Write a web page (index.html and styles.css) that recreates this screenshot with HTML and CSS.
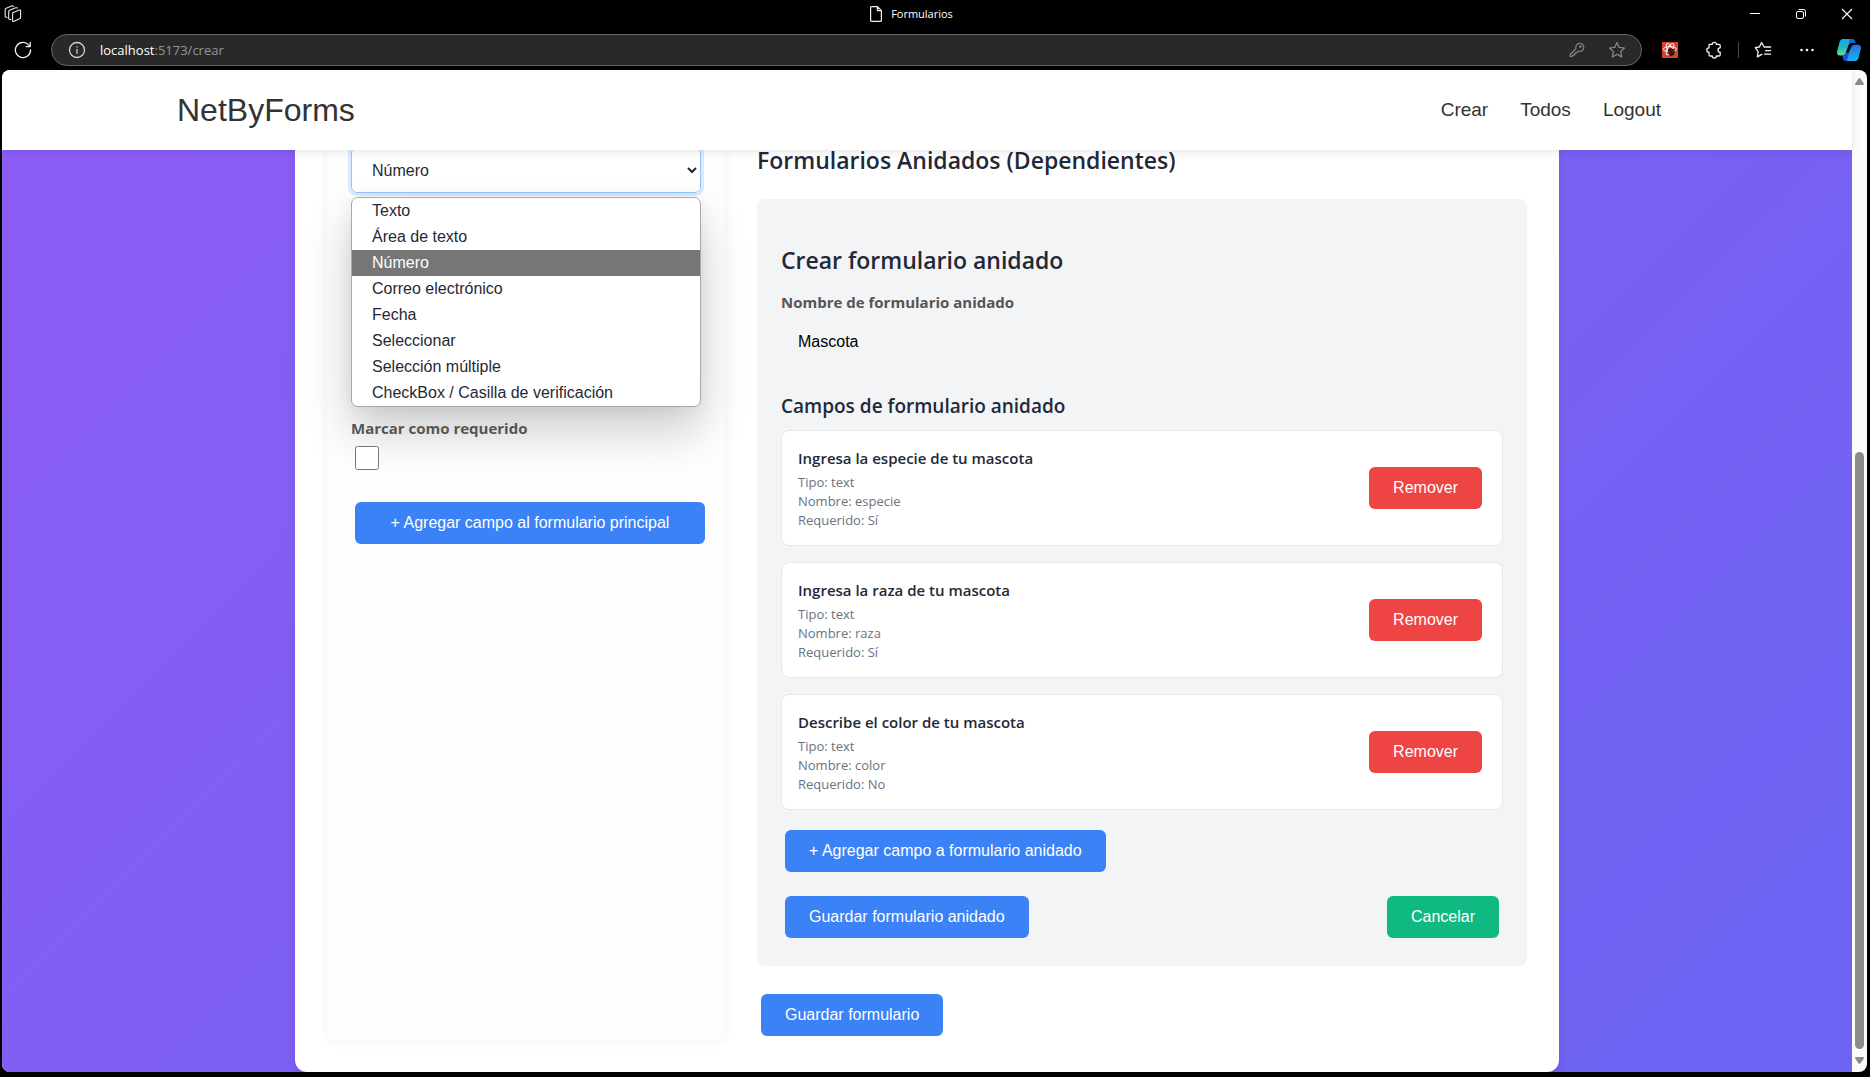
FILE: index.html
```html
<!DOCTYPE html>
<html lang="es">
<head>
<meta charset="utf-8">
<meta name="viewport" content="width=device-width, initial-scale=1">
<title>Formularios</title>
<link rel="stylesheet" href="styles.css">
</head>
<body>
<div class="browser">
  <div class="titlebar">
    <div class="titlebar-start">
      <button class="chrome-button workspaces" type="button" aria-label="Espacios de trabajo">
        <svg width="18" height="18" viewBox="0 0 18 18" fill="none" stroke="#e8e8e8" stroke-width="1.1" stroke-linejoin="round" stroke-linecap="round"><path d="M8.6 8.4Q8.600 7.800 9.200 7.500L15.600 5Q16.600 4.700 16.600 5.700V12.500Q16.600 13.200 16 13.500L9.600 16.400Q8.600 16.800 8.600 15.800Z"/><path d="M6.800 14.600 4.700 14V6.600Q4.700 5.600 5.600 5.200L11.600 2.800Q12.600 2.500 13.400 3"/><path d="M3 12.600 1.200 11.800V4.600Q1.200 3.600 2.200 3.200L7.600 1Q8.600.7 9.600 1.200"/></svg>
      </button>
    </div>
    <div class="window-title">
      <svg width="14" height="18" viewBox="0 0 14 18" fill="none" stroke="#f2f2f2" stroke-width="1.2" stroke-linejoin="round"><path d="M2.6 1.6H8.4L12.4 5.6V15.4Q12.4 16.4 11.4 16.4H2.6Q1.6 16.4 1.6 15.4V2.6Q1.6 1.6 2.6 1.6ZM8.4 1.6V5.6H12.4"/></svg>
      <span>Formularios</span>
    </div>
    <div class="window-controls">
      <button class="chrome-button window-button" type="button" aria-label="Minimizar"><svg width="12" height="12" viewBox="0 0 12 12" stroke="#fff"><path d="M1 5.5H11"/></svg></button>
      <button class="chrome-button window-button" type="button" aria-label="Restaurar"><svg width="12" height="12" viewBox="0 0 12 12" fill="none" stroke="#fff"><rect x="1.5" y="3.5" width="7" height="7" rx="1.5"/><path d="M3.5 1.5H8.5Q10.5 1.5 10.5 3.5V8.5"/></svg></button>
      <button class="chrome-button window-button" type="button" aria-label="Cerrar"><svg width="12" height="12" viewBox="0 0 12 12" stroke="#fff" stroke-width="1.1"><path d="M1 1 11 11M11 1 1 11"/></svg></button>
    </div>
  </div>

  <div class="toolbar">
    <button class="chrome-button reload" type="button" aria-label="Actualizar">
      <svg width="18" height="18" viewBox="0 0 18 18" fill="none" stroke="#f2f2f2" stroke-width="1.3" stroke-linecap="round" stroke-linejoin="round"><path d="M16.6 9A7.6 7.6 0 1 1 14.8 4.1L16 5.4M16.2 1.4V5.6H12"/></svg>
    </button>
    <div class="address">
      <svg width="18" height="18" viewBox="0 0 18 18" fill="none" stroke="#d0d0d0" stroke-width="1.3"><circle cx="9" cy="9" r="7.5"/><path d="M9 8V12.8M9 5.2V6.6"/></svg>
      <span class="url"><span class="url-host">localhost</span>:5173/crear</span>
      <button class="chrome-button address-button" type="button" aria-label="Contraseñas">
        <svg width="16" height="16" viewBox="0 0 16 16" fill="none" stroke="#8c8c8c" stroke-width="1.1" stroke-linejoin="round"><path d="M7 6.6A4 4 0 1 1 9.5 9.1L8.3 10.3H6.9V11.8H5.3V13.3H3.6L3 14.4H1.2V12.5Z"/><circle cx="11.4" cy="4.6" r=".7"/></svg>
      </button>
      <button class="chrome-button address-button" type="button" aria-label="Agregar a favoritos">
        <svg width="18" height="18" viewBox="0 0 18 18" fill="none" stroke="#8c8c8c" stroke-width="1.2" stroke-linejoin="round"><path d="M9 1.6 11.2 6.4 16.5 7 12.6 10.6 13.7 15.9 9 13.2 4.3 15.9 5.4 10.6 1.5 7 6.8 6.4Z"/></svg>
      </button>
    </div>
    <button class="chrome-button tool" type="button" aria-label="Extensión">
      <svg width="16" height="16" viewBox="0 0 16 16"><rect width="16" height="16" fill="#d9412f"/><g fill="none" stroke="#fff" stroke-width=".9"><ellipse cx="8" cy="7.2" rx="6.6" ry="2.6"/><ellipse cx="8" cy="7.2" rx="6.2" ry="2.5" transform="rotate(60 8 7.2)"/><ellipse cx="8" cy="7.2" rx="6.2" ry="2.5" transform="rotate(-60 8 7.2)"/></g><path d="M6 8 8 6 11.5 7 13 9.5 12 13 9 14.4 6.4 12Z" fill="#2b1512"/><path d="M7.4 9.5 9 11M9.6 8.2 11.4 10" stroke="#d9412f" stroke-width=".7"/></svg>
    </button>
    <button class="chrome-button tool" type="button" aria-label="Extensiones">
      <svg width="18" height="18" viewBox="0 0 18 18" fill="none" stroke="#f2f2f2" stroke-width="1.3" stroke-linejoin="round"><path d="M4.800 3.400H7.200A2.100 2.100 0 0 1 11.400 3.400H14Q15.200 3.400 15.200 4.600V6.800A2.200 2.200 0 0 0 15.200 11.200V13.800Q15.200 15 14 15H11.400A2.100 2.100 0 0 1 7.200 15H5.200Q4 15 4 13.800V11.200A2.200 2.200 0 0 1 4 6.800V4.200Q4 3.400 4.800 3.400Z"/></svg>
    </button>
    <span class="tool-divider"></span>
    <button class="chrome-button tool" type="button" aria-label="Favoritos">
      <svg width="18" height="18" viewBox="0 0 18 18" fill="none" stroke="#f2f2f2" stroke-width="1.3" stroke-linejoin="round" stroke-linecap="round"><path d="M16.6 6H10.2L7.6 1.6 5.3 6 1.2 6.7 4.1 10.3 3.4 15.9 7.8 13.4M11.5 9.6H16.6M10.5 13.2H16.6"/></svg>
    </button>
    <button class="chrome-button tool" type="button" aria-label="Configuración y más">
      <svg width="16" height="4" viewBox="0 0 16 4" fill="#f2f2f2"><circle cx="2.500" cy="2" r="1.3"/><circle cx="8" cy="2" r="1.3"/><circle cx="13.500" cy="2" r="1.3"/></svg>
    </button>
    <button class="chrome-button tool tool-last" type="button" aria-label="Copilot">
      <svg width="24" height="22" viewBox="0 0 24 22">
        <defs>
          <linearGradient id="cp-left" x1="0" y1="0" x2="0" y2="1"><stop offset="0" stop-color="#18a8e8"/><stop offset=".5" stop-color="#1cb8c4"/><stop offset="1" stop-color="#6fdc8c"/></linearGradient>
          <linearGradient id="cp-right" x1="0" y1="0" x2="0" y2="1"><stop offset="0" stop-color="#2a6fe0"/><stop offset="1" stop-color="#18b4f4"/></linearGradient>
        </defs>
        <path d="M6 0H15Q17.500 0 18.400 4H14Q12 4 11.300 6.500L8.800 14Q8 16.400 5.500 16.400H3Q-.600 16.400 .200 12L2.500 3Q3.300 0 6 0Z" fill="url(#cp-left)"/>
        <path d="M12.500 0H15Q17.500 0 18.400 4H14Q12.600 4 11.800 5.400Z" fill="#1468c8"/>
        <path d="M18 22H9Q6.500 22 5.600 17.600Q8.300 16.600 8.800 14H11.500L14.300 8Q15.200 5.800 17.500 5.800H21Q24.600 5.800 23.800 10L21.500 19Q20.700 22 18 22Z" fill="url(#cp-right)"/>
        <path d="M5.600 16.400Q8.200 16 9 13.500L12 14 10 22H9Q6.500 22 5.600 16.400Z" fill="#1c50e0"/>
      </svg>
    </button>
  </div>

  <div class="viewport">
    <div class="page">
      <header class="site-header">
        <div class="site-header-inner">
          <a class="brand" href="#">NetByForms</a>
          <nav class="site-nav">
            <a href="#">Crear</a>
            <a href="#">Todos</a>
            <a href="#">Logout</a>
          </nav>
        </div>
      </header>

      <main class="content">
        <div class="builder">
          <section class="main-form">
            <div class="type-field">
              <select class="type-select" aria-label="Tipo de campo">
                <option>Texto</option>
                <option>Área de texto</option>
                <option selected>Número</option>
                <option>Correo electrónico</option>
                <option>Fecha</option>
                <option>Seleccionar</option>
                <option>Selección múltiple</option>
                <option>CheckBox / Casilla de verificación</option>
              </select>
              <ul class="type-menu" role="listbox" aria-label="Tipo de campo">
                <li role="option">Texto</li>
                <li role="option">Área de texto</li>
                <li role="option" class="is-selected" aria-selected="true">Número</li>
                <li role="option">Correo electrónico</li>
                <li role="option">Fecha</li>
                <li role="option">Seleccionar</li>
                <li role="option">Selección múltiple</li>
                <li role="option">CheckBox / Casilla de verificación</li>
              </ul>
            </div>
            <label class="field-label" for="required">Marcar como requerido</label>
            <input class="required-box" id="required" type="checkbox">
            <button class="button button-wide" type="button">+ Agregar campo al formulario principal</button>
          </section>

          <section class="nested">
            <h2 class="heading">Formularios Anidados (Dependientes)</h2>
            <div class="nested-panel">
              <h2 class="heading panel-heading">Crear formulario anidado</h2>
              <label class="field-label" for="nested-name">Nombre de formulario anidado</label>
              <input class="text-input" id="nested-name" type="text" value="Mascota">
              <h3 class="subheading">Campos de formulario anidado</h3>
              <ul class="field-list">
                <li class="field-card">
                  <div>
                    <h4 class="field-title">Ingresa la especie de tu mascota</h4>
                    <p class="field-meta">Tipo: text</p>
                    <p class="field-meta">Nombre: especie</p>
                    <p class="field-meta">Requerido: Sí</p>
                  </div>
                  <button class="button button-danger" type="button">Remover</button>
                </li>
                <li class="field-card">
                  <div>
                    <h4 class="field-title">Ingresa la raza de tu mascota</h4>
                    <p class="field-meta">Tipo: text</p>
                    <p class="field-meta">Nombre: raza</p>
                    <p class="field-meta">Requerido: Sí</p>
                  </div>
                  <button class="button button-danger" type="button">Remover</button>
                </li>
                <li class="field-card">
                  <div>
                    <h4 class="field-title">Describe el color de tu mascota</h4>
                    <p class="field-meta">Tipo: text</p>
                    <p class="field-meta">Nombre: color</p>
                    <p class="field-meta">Requerido: No</p>
                  </div>
                  <button class="button button-danger" type="button">Remover</button>
                </li>
              </ul>
              <div class="actions">
                <button class="button" type="button">+ Agregar campo a formulario anidado</button>
              </div>
              <div class="actions">
                <button class="button" type="button">Guardar formulario anidado</button>
                <button class="button button-success" type="button">Cancelar</button>
              </div>
            </div>
            <div class="actions">
              <button class="button" type="button">Guardar formulario</button>
            </div>
          </section>
        </div>
      </main>
    </div>

    <div class="scrollbar" aria-hidden="true">
      <svg width="9" height="7" viewBox="0 0 9 7" fill="#8b8b8b"><path d="M3.700.500Q4.500-.400 5.300.500L8.800 5.400Q9.200 7 8 7H1Q-.200 7 .200 5.400Z"/></svg>
      <div class="scroll-track"><div class="scroll-thumb"></div></div>
      <svg width="9" height="7" viewBox="0 0 9 7" fill="#8b8b8b"><path d="M3.700 6.500Q4.500 7.400 5.300 6.500L8.800 1.600Q9.200 0 8 0H1Q-.200 0 .200 1.600Z"/></svg>
    </div>
  </div>
</div>
</body>
</html>
```
FILE: styles.css
```css
:root {
  --sans: "Open Sans", "Noto Sans", sans-serif;
  --arial: "Liberation Sans", Arial, sans-serif;
  --blue: #3b82f6;
  --ink: #1f2937;
}

* {
  box-sizing: border-box;
}

body {
  margin: 0;
  background: #000;
  font-family: var(--sans);
  color: var(--ink);
}

h2, h3, h4, p, ul {
  margin: 0;
  padding: 0;
}

ul {
  list-style: none;
}

svg {
  display: block;
  flex: none;
}

/* Browser frame */
.browser {
  display: flex;
  flex-direction: column;
  height: 100vh;
}

.chrome-button {
  display: flex;
  align-items: center;
  justify-content: center;
  padding: 0;
  border: 0;
  background: none;
}

.titlebar {
  display: flex;
  align-items: center;
  height: 28px;
  flex: none;
}

.titlebar-start {
  width: 90px;
  padding-left: 4px;
}

.window-title {
  flex: 1;
  display: flex;
  align-items: center;
  justify-content: center;
  gap: 8px;
  font-size: 11px;
  line-height: 16px;
  color: #fff;
}

.window-controls {
  display: flex;
}

.window-button {
  width: 46px;
  height: 28px;
}

.toolbar {
  display: flex;
  align-items: center;
  height: 42px;
  padding-top: 2px;
  flex: none;
}

.reload {
  width: 46px;
  height: 32px;
}

.address {
  flex: 1;
  display: flex;
  align-items: center;
  height: 32px;
  margin: 0 6px 0 5px;
  padding: 0 4px 0 16px;
  border: 1px solid #666;
  border-radius: 16px;
  background: #292929;
}

.url {
  flex: 1;
  margin-left: 14px;
  font-size: 13px;
  line-height: 20px;
  color: #959595;
}

.url-host {
  color: #fff;
}

.address-button {
  width: 40px;
  height: 28px;
}

.tool {
  width: 44px;
  height: 32px;
}

.tool-last {
  width: 41px;
  padding-right: 2px;
}

.tool-divider {
  width: 1px;
  height: 16px;
  margin: 0 2px;
  background: #4a4a4a;
}

.viewport {
  flex: 1;
  min-height: 0;
  display: flex;
  margin: 0 3px 5px 2px;
  border-radius: 8px;
  overflow: hidden;
  background: #fcfcfc;
}

.scrollbar {
  width: 15px;
  display: flex;
  flex-direction: column;
  align-items: center;
  gap: 8px;
  padding: 8px 0;
}

.scroll-track {
  flex: 1;
  width: 9px;
  display: flex;
  align-items: flex-end;
}

.scroll-thumb {
  width: 100%;
  height: 62.5%;
  border-radius: 5px;
  background: #8b8b8b;
}

/* Site */
.page {
  flex: 1;
  display: flex;
  flex-direction: column;
}

.site-header {
  position: relative;
  z-index: 2;
  flex: none;
  background: #fff;
  box-shadow: 0 2px 8px rgba(0, 0, 0, 0.1);
  font-family: var(--arial);
}

.site-header-inner {
  display: flex;
  align-items: center;
  justify-content: space-between;
  max-width: 1500px;
  height: 80px;
  margin: 0 auto;
}

.brand {
  font-size: 32px;
  color: #333;
  text-decoration: none;
}

.site-nav {
  display: flex;
  gap: 32px;
  padding-right: 16px;
}

.site-nav a {
  font-size: 19px;
  color: #333;
  text-decoration: none;
}

/* The page is scrolled to its end, so content is held to the bottom edge */
.content {
  flex: 1;
  min-height: 0;
  display: flex;
  flex-direction: column;
  justify-content: flex-end;
  overflow: hidden;
  background: linear-gradient(135deg, #8b5cf6, #6366f1) top / 100% 1700px;
}

.builder {
  display: grid;
  grid-template-columns: minmax(0, 398px) minmax(0, 1fr);
  gap: 32px;
  width: 100%;
  max-width: 1264px;
  margin: 0 auto;
  padding: 0 32px 32px;
  border-radius: 0 0 12px 12px;
  background: #fff;
  box-shadow: 0 4px 10px rgba(0, 0, 0, 0.1);
}

.main-form {
  padding: 4px 24px 24px;
  border-radius: 0 0 8px 8px;
  background: #fefefe;
  box-shadow: 0 2px 12px rgba(0, 0, 0, 0.05);
}

.type-field {
  position: relative;
  height: 269px;
}

.type-select {
  display: block;
  width: 100%;
  height: 46px;
  padding: 0 0 0 16px;
  border: 1px solid #93c5fd;
  border-radius: 6px;
  outline: 3px solid #dbeafe;
  background: #fff;
  font-family: var(--arial);
  font-size: 16px;
  color: var(--ink);
}

.type-menu {
  position: absolute;
  z-index: 1;
  top: 50px;
  left: 0;
  right: 0;
  overflow: hidden;
  border: 1px solid #a9a9a9;
  border-radius: 7px;
  background: #fff;
  box-shadow: 0 24px 48px rgba(0, 0, 0, 0.2), 0 2px 16px rgba(0, 0, 0, 0.06);
  font-family: var(--arial);
  font-size: 16px;
  line-height: 26px;
}

.type-menu li {
  padding-left: 20px;
}

.type-menu .is-selected {
  background: #767676;
  color: #fff;
}

.field-label {
  position: relative;
  z-index: 1;
  display: block;
  font-size: 15px;
  font-weight: 700;
  line-height: 24px;
  color: #555;
}

.required-box {
  position: relative;
  z-index: 1;
  display: block;
  width: 24px;
  height: 24px;
  margin: 6px 4px 28px;
}

.button {
  height: 42px;
  margin: 4px;
  padding: 0 24px;
  border: 0;
  border-radius: 6px;
  background: var(--blue);
  color: #fff;
  font-family: var(--arial);
  font-size: 16px;
}

.button-wide {
  width: 100%;
}

.button-danger {
  background: #ef4444;
}

.button-success {
  background: #10b981;
}

.heading {
  font-size: 23px;
  font-weight: 600;
  line-height: 34px;
}

.nested-panel {
  margin: 22px 0 24px;
  padding: 44px 24px 24px;
  border-radius: 8px;
  background: #f3f4f6;
}

.panel-heading {
  margin-bottom: 13px;
}

.text-input {
  display: block;
  width: 100%;
  height: 50px;
  margin: 3px 0 25px;
  padding: 0 16px;
  border: 1px solid #f5f6f7;
  border-radius: 8px;
  background: #f3f4f6;
  font-family: var(--arial);
  font-size: 16px;
  color: #000;
}

.subheading {
  margin-bottom: 10px;
  font-size: 19px;
  font-weight: 600;
  line-height: 28px;
}

.field-list {
  display: grid;
  gap: 16px;
  margin-bottom: 16px;
}

.field-card {
  display: flex;
  align-items: center;
  justify-content: space-between;
  height: 116px;
  padding: 0 16px;
  border: 1px solid #e5e7eb;
  border-radius: 8px;
  background: #fff;
}

.field-title {
  margin-bottom: 4px;
  font-size: 15px;
  font-weight: 600;
  line-height: 22px;
}

.field-meta {
  font-size: 13px;
  line-height: 19px;
  color: #6b7280;
}

.actions {
  display: flex;
  justify-content: space-between;
}

.actions + .actions {
  margin-top: 16px;
}
```
